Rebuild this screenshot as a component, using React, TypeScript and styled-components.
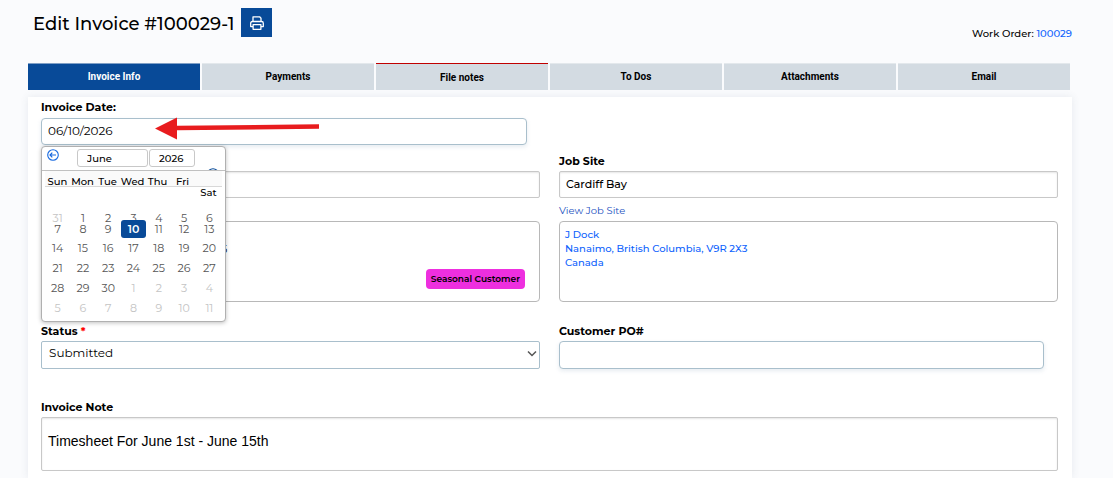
import React from "react";
import styled, { createGlobalStyle } from "styled-components";

const Global = createGlobalStyle`
  * { box-sizing: border-box; }
  body {
    margin: 0;
    background: #fafbfd;
    color: #000;
    font-family: Montserrat, Inter, "Liberation Sans", sans-serif;
    font-size: 11px;
    line-height: 15px;
  }
  input, select, textarea, button { font-family: inherit; color: inherit; margin: 0; }
`;

const Page = styled.div`
  min-height: 100vh;
  display: flex;
  flex-direction: column;
  padding: 0 41px 0 28px;
`;

const Header = styled.header`
  display: flex;
  align-items: flex-start;
  gap: 7px;
  padding: 8px 0 22px 5px;
`;

const Title = styled.h1`
  margin: 0;
  font-size: 18px;
  font-weight: 500;
  line-height: 32px;
`;

const PrintButton = styled.button`
  display: flex;
  align-items: center;
  justify-content: center;
  width: 31px;
  height: 29px;
  padding: 0;
  border: 0;
  background: #084a98;
  color: #fff;
`;

const WorkOrder = styled.p`
  margin: 18px 0 0 auto;
  font-size: 10px;
  font-weight: 500;
`;

const Link = styled.a<{ $muted?: boolean }>`
  color: ${(p) => (p.$muted ? "#2250c0" : "#0d62fd")};
  font-weight: ${(p) => (p.$muted ? 400 : 500)};
  font-size: 10px;
  text-decoration: none;
`;

const Tabs = styled.nav`
  display: grid;
  grid-template-columns: repeat(6, 1fr);
  gap: 2px;
  margin-right: 2px;
`;

const Tab = styled.button<{ $active?: boolean; $flagged?: boolean }>`
  height: 27px;
  padding: ${(p) => (p.$flagged ? "2px" : "0")} 0 1px;
  border: 0;
  border-top: 1px solid
    ${(p) => (p.$flagged ? "#c00000" : p.$active ? "#7f9fc6" : "#e3e8ec")};
  background: ${(p) => (p.$active ? "#084a98" : "#d3dbe2")};
  color: ${(p) => (p.$active ? "#fff" : "#000")};
  font-family: Roboto, sans-serif;
  font-size: 10px;
  font-weight: 700;
`;

const Panel = styled.main`
  flex: 1;
  margin-top: 7px;
  padding: 3px 14px 7px 13px;
  background: #fff;
  box-shadow: 0 0 8px rgba(60, 80, 110, 0.1);
`;

const Columns = styled.div<{ $top: number }>`
  display: grid;
  grid-template-columns: 1fr 1fr;
  column-gap: 19px;
  margin-top: ${(p) => p.$top}px;
`;

const Field = styled.div<{ $inset?: number; $top?: number }>`
  position: relative;
  display: flex;
  flex-direction: column;
  gap: 2px;
  margin-top: ${(p) => p.$top ?? 0}px;
  margin-right: ${(p) => p.$inset ?? 0}px;
`;

const DateField = styled(Field)`
  gap: 3px;
`;

const Label = styled.label`
  min-height: 15px;
  font-weight: 700;
`;

const Required = styled.span`
  color: #f00;
`;

const TextInput = styled.input<{ $plain?: boolean }>`
  width: 100%;
  height: ${(p) => (p.$plain ? 27 : 28)}px;
  padding: 0 6px 1px;
  border: 1px solid ${(p) => (p.$plain ? "#c8c8c8" : "#a9bfcc")};
  border-radius: ${(p) => (p.$plain ? 2 : 4)}px;
  background: #fff;
  box-shadow: ${(p) =>
    p.$plain
      ? "inset 0 1px 2px rgba(0, 0, 0, 0.1)"
      : "0 2px 4px rgba(120, 150, 175, 0.18)"};
  font-size: ${(p) => (p.$plain ? 11 : 12)}px;
  font-weight: ${(p) => (p.$plain ? 500 : 400)};
  outline: 0;
`;

const DateInput = styled(TextInput)`
  height: 27px;
  padding-bottom: 2px;
`;

const SelectBox = styled.div`
  position: relative;
`;

const Select = styled.select`
  appearance: none;
  display: block;
  width: 100%;
  height: 28px;
  padding: 0 24px 5px 7px;
  border: 1px solid #a9bfcc;
  border-radius: 2px;
  background: #fff;
  font-size: 12px;
`;

const SelectChevron = styled.svg`
  position: absolute;
  right: 3px;
  top: 9px;
  pointer-events: none;
`;

const Note = styled.textarea`
  display: block;
  width: 100%;
  height: 54px;
  padding: 15px 6px 0;
  border: 1px solid #c8c8c8;
  border-radius: 2px;
  box-shadow: inset 0 1px 2px rgba(0, 0, 0, 0.1);
  resize: none;
  && { font-family: "Liberation Sans", Arial, sans-serif; }
  font-size: 14px;
  line-height: 16px;
`;

const LinkLine = styled.div`
  height: 15px;
  margin: 3px 0 1px;
`;

const AddressBox = styled.address`
  display: flex;
  flex-direction: column;
  height: 81px;
  padding: 6px 5px 0;
  border: 1px solid #b8b8b8;
  border-radius: 4px;
  font-style: normal;
  line-height: 14px;
`;

const CustomerBox = styled(AddressBox)`
  justify-content: space-between;
  padding: 20px 14px 12px;
`;

const CustomerLine = styled.span`
  padding-left: 165px;
`;

const Badge = styled.span`
  align-self: flex-end;
  padding: 3px 5px;
  border-radius: 4px;
  background: #ee2fdf;
  font-size: 9px;
  font-weight: 600;
`;

const Arrow = styled.svg`
  position: absolute;
  left: 114px;
  top: 17px;
  pointer-events: none;
`;

const Calendar = styled.div`
  position: absolute;
  z-index: 2;
  left: 0;
  top: calc(100% + 1px);
  width: 185px;
  height: 176px;
  border: 1px solid #b0b0b0;
  border-radius: 4px;
  background: #fff;
  box-shadow: 0 1px 4px rgba(0, 0, 0, 0.25);
  overflow: hidden;
`;

const CalendarHead = styled.div`
  display: flex;
  align-items: flex-start;
  height: 24px;
  padding: 2px 6px 0 5px;
  border-bottom: 1px solid #c0c0c0;
  overflow: hidden;
`;

const RoundButton = styled.button<{ $low?: boolean }>`
  display: flex;
  flex: none;
  width: 12px;
  height: 12px;
  padding: 0;
  margin-top: ${(p) => (p.$low ? 19 : 0)}px;
  border: 0;
  background: none;
  color: ${(p) => (p.$low ? "#084a98" : "#1769e0")};
`;

const Pickers = styled.div`
  display: flex;
  flex: 1;
  gap: 1px;
  padding-left: 18px;
`;

const Picker = styled.select<{ $width: number }>`
  appearance: none;
  width: ${(p) => p.$width}px;
  height: 18px;
  padding: 0 9px;
  border: 1px solid #c8c8c8;
  border-radius: 3px;
  background: #fff;
  font-size: 10px;
  font-weight: 500;
`;

const Weekdays = styled.div`
  display: flex;
  flex-wrap: wrap;
  align-content: flex-start;
  height: 16px;
  margin: 0 3px;
  padding-top: 5px;
  border-bottom: 1px solid #d8d8d8;
  background: #fafafa;
  font-size: 10px;
  font-weight: 500;
  line-height: 11px;
  text-align: center;
`;

const Weekday = styled.span`
  width: 25px;
  white-space: nowrap;

  &:last-child {
    margin-left: 151px;
  }
`;

const Days = styled.div`
  display: grid;
  grid-template-columns: repeat(7, 1fr);
  grid-template-rows: 11px 19px repeat(4, 20px);
  margin: 22px 3px 0;
`;

const Day = styled.button<{ $state?: "out" | "on" }>`
  height: 18px;
  padding: 0;
  border: 0;
  border-radius: 3px;
  background: ${(p) => (p.$state === "on" ? "#084a98" : "none")};
  color: ${(p) =>
    p.$state === "on" ? "#fff" : p.$state === "out" ? "#c4c4c4" : "#555"};
  font-size: 11px;
  font-weight: ${(p) => (p.$state === "on" ? 600 : 400)};
  line-height: 11px;
`;

const tabs = ["Invoice Info", "Payments", "File notes", "To Dos", "Attachments", "Email"];
const weekdays = ["Sun", "Mon", "Tue", "Wed", "Thu", "Fri", "Sat"];

// June 2026 starts on a Monday, so the grid opens with May 31.
const days = Array.from({ length: 42 }, (_, i) => {
  if (i === 0) return { n: 31, state: "out" as const };
  if (i > 30) return { n: i - 30, state: "out" as const };
  return { n: i, state: i === 10 ? ("on" as const) : undefined };
});

const CircleArrow = ({ flip }: { flip?: boolean }) => (
  <svg width="12" height="12" viewBox="0 0 12 12" fill="none" stroke="currentColor">
    <circle cx="6" cy="6" r="5.3" strokeWidth="1.1" />
    <path d={flip ? "M3 6h6M6.7 3.6 9 6 6.7 8.4" : "M9 6H3M5.3 3.6 3 6l2.3 2.4"} strokeWidth="1.2" />
  </svg>
);

const PrintIcon = () => (
  <svg width="14" height="14" viewBox="0 0 14 14" fill="none" stroke="currentColor" strokeWidth="1.3" strokeLinejoin="round">
    <path d="M3 5.4V.8h6.6L11 2.2v3.2" />
    <path d="M3 10.6H.7V7.2c0-1 .7-1.7 1.7-1.7h9.2c1 0 1.7.7 1.7 1.7v3.4H11" />
    <path d="M3.1 8.6h7.8v4.7H3.1z" />
  </svg>
);

export default function App() {
  return (
    <Page>
      <Global />
      <Header>
        <Title>Edit Invoice #100029-1</Title>
        <PrintButton aria-label="Print">
          <PrintIcon />
        </PrintButton>
        <WorkOrder>
          Work Order: <Link href="#work-order">100029</Link>
        </WorkOrder>
      </Header>

      <Tabs>
        {tabs.map((t, i) => (
          <Tab key={t} $active={i === 0} $flagged={i === 2}>
            {t}
          </Tab>
        ))}
      </Tabs>

      <Panel>
        <Columns $top={0}>
          <DateField $inset={13}>
            <Label htmlFor="date">Invoice Date:</Label>
            <DateInput id="date" defaultValue="06/10/2026" />
            <Arrow width="166" height="24" viewBox="0 0 166 24">
              <path d="M0 11.5 22 .5v8.3L164 7.2v4.6L22 13.2v9.3z" fill="#e81c1e" />
            </Arrow>
            <Calendar>
              <CalendarHead>
                <RoundButton aria-label="Previous month">
                  <CircleArrow />
                </RoundButton>
                <Pickers>
                  <Picker $width={71} aria-label="Month" defaultValue="June">
                    <option>June</option>
                  </Picker>
                  <Picker $width={46} aria-label="Year" defaultValue="2026">
                    <option>2026</option>
                  </Picker>
                </Pickers>
                <RoundButton $low aria-label="Next month">
                  <CircleArrow flip />
                </RoundButton>
              </CalendarHead>
              <Weekdays>
                {weekdays.map((d) => (
                  <Weekday key={d}>{d}</Weekday>
                ))}
              </Weekdays>
              <Days>
                {days.map((d, i) => (
                  <Day key={i} $state={d.state}>
                    {d.n}
                  </Day>
                ))}
              </Days>
            </Calendar>
          </DateField>
        </Columns>

        <Columns $top={9}>
          <Field>
            <Label as="div" />
            <TextInput $plain aria-label="Customer" />
            <LinkLine />
            <CustomerBox>
              <CustomerLine>5</CustomerLine>
              <Badge>Seasonal Customer</Badge>
            </CustomerBox>
          </Field>
          <Field>
            <Label htmlFor="site">Job Site</Label>
            <TextInput $plain id="site" defaultValue="Cardiff Bay" />
            <LinkLine>
              <Link $muted href="#job-site">View Job Site</Link>
            </LinkLine>
            <AddressBox>
              <Link href="#address">
                J Dock
                <br />
                Nanaimo, British Columbia, V9R 2X3
                <br />
                Canada
              </Link>
            </AddressBox>
          </Field>
        </Columns>

        <Columns $top={22}>
          <Field>
            <Label htmlFor="status">
              Status <Required>*</Required>
            </Label>
            <SelectBox>
              <Select id="status" defaultValue="Submitted">
                <option>Submitted</option>
              </Select>
              <SelectChevron width="10" height="8" viewBox="0 0 10 8" fill="none" stroke="#555" strokeWidth="1.5">
                <path d="M1 1.5 5 5.5 9 1.5" />
              </SelectChevron>
            </SelectBox>
          </Field>
          <Field $inset={14}>
            <Label htmlFor="po">Customer PO#</Label>
            <TextInput id="po" />
          </Field>
        </Columns>

        <Field $top={31}>
          <Label htmlFor="note">Invoice Note</Label>
          <Note id="note" defaultValue="Timesheet For June 1st - June 15th" />
        </Field>
      </Panel>
    </Page>
  );
}
